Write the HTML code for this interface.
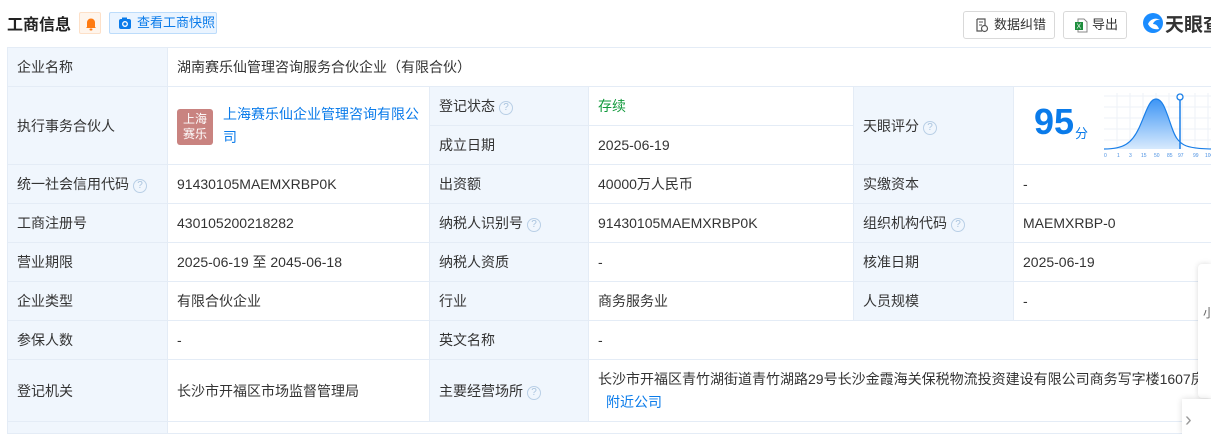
<!DOCTYPE html>
<html><head><meta charset="utf-8"><style>
*{margin:0;padding:0;box-sizing:border-box}
html,body{width:1211px;height:434px;overflow:hidden}
body{background:#fff;font-family:"Liberation Sans","Noto Sans CJK SC",sans-serif;color:#333;font-size:14px;position:relative}
.title{position:absolute;left:7px;top:11px;font-size:16px;font-weight:bold;color:#222}
.bell{position:absolute;left:79px;top:12px;width:22px;height:22px;border:1px solid #fde0c8;background:#fff5ec;border-radius:2px}
.snap{position:absolute;left:109px;top:12px;width:108px;height:22px;border:1px solid #bcdcfb;background:#eaf4ff;border-radius:2px;color:#0a7bea;font-size:13px;line-height:20px;padding-left:27px}
.btn{position:absolute;top:11px;height:28px;border:1px solid #d9d9d9;border-radius:3px;font-size:13px;line-height:26px;color:#333}
table{position:absolute;left:7px;top:47px;border-collapse:collapse;table-layout:fixed;width:1270px}
td{border:1px solid #e4ecf6;padding:0 9px;height:39px;vertical-align:middle}
td.l{background:#f0f6fd}
.q{display:inline-block;width:14px;height:14px;border:1px solid #b9cfe6;border-radius:50%;color:#a9c3de;font-size:10px;line-height:12px;text-align:center;vertical-align:1px;margin-left:4px}
a{color:#0a7bea;text-decoration:none}
</style></head><body>
<div class="title">工商信息</div>
<div class="bell"><svg width="22" height="22" viewBox="0 0 22 22"><path d="M7 14V9.5a4 4 0 0 1 8 0V14l1 1H6z" fill="#ff7b12"/><rect x="9.5" y="15.5" width="3" height="2" rx="1" fill="#ff7b12"/></svg></div>
<div class="snap"><svg style="position:absolute;left:8px;top:3px" width="14" height="14" viewBox="0 0 14 14"><rect x="1" y="3" width="12" height="10" rx="2" fill="#0a7bea"/><rect x="4" y="1.5" width="5" height="3" fill="#0a7bea"/><circle cx="7" cy="8" r="2.3" fill="none" stroke="#fff" stroke-width="1.3"/></svg>查看工商快照</div>
<div class="btn" style="left:963px;width:92px;padding-left:30px"><svg style="position:absolute;left:11px;top:6px" width="14" height="15" viewBox="0 0 14 15"><path d="M2 1h8v6M2 1v12h5" fill="none" stroke="#555" stroke-width="1.2"/><circle cx="9.5" cy="10.5" r="3" fill="none" stroke="#555" stroke-width="1.2"/><path d="M4 4h4M4 7h3" stroke="#555"/></svg>数据纠错</div>
<div class="btn" style="left:1063px;width:64px;padding-left:28px"><svg style="position:absolute;left:10px;top:6px" width="14" height="15" viewBox="0 0 14 15"><path d="M4 1h6l3 3v10H4z" fill="none" stroke="#888"/><rect x="1" y="4" width="8" height="8" fill="#1e8e3e"/><text x="2.5" y="10.5" font-size="7" fill="#fff" font-family="Liberation Sans">X</text></svg>导出</div>
<svg style="position:absolute;left:1142px;top:12px" width="22" height="22" viewBox="0 0 22 22"><circle cx="11" cy="11" r="10" fill="#1a8cff"/><path d="M6 12c2-5 8-7 12-4-3-1-6 1-7 4 3 0 5 2 6 5-5 1-9-1-11-5z" fill="#fff"/></svg>
<div style="position:absolute;left:1165px;top:10px;font-size:19px;font-weight:bold;color:#333;white-space:nowrap">天眼查</div>
<table>
<colgroup><col style="width:160px"><col style="width:262px"><col style="width:159px"><col style="width:265px"><col style="width:160px"><col style="width:264px"></colgroup>
<tr><td class="l">企业名称</td><td colspan="5">湖南赛乐仙管理咨询服务合伙企业（有限合伙）</td></tr>
<tr><td class="l" rowspan="2">执行事务合伙人</td><td rowspan="2" style="position:relative;padding-left:55px;line-height:23px"><div style="position:absolute;left:9px;top:22px;width:36px;height:36px;background:#c98380;border-radius:3px;color:#fff;font-size:12px;line-height:15px;text-align:center;padding-top:3px">上海<br>赛乐</div><a>上海赛乐仙企业管理咨询有限公司</a></td><td class="l">登记状态<span class="q">?</span></td><td style="color:#139a3d">存续</td><td class="l" rowspan="2">天眼评分<span class="q">?</span></td><td rowspan="2" style="position:relative"><span style="position:absolute;left:20px;top:14px;font-size:36px;font-weight:bold;color:#0a7bea">95</span><span style="position:absolute;left:61px;top:36px;font-size:13px;color:#0a7bea">分</span>
<svg style="position:absolute;left:90px;top:6px" width="110" height="66" viewBox="0 0 110 66"><defs><linearGradient id="g" x1="0" y1="0" x2="0" y2="1"><stop offset="0" stop-color="#3d95f5"/><stop offset="1" stop-color="#d8eafd"/></linearGradient></defs><g stroke="#eef2f7" stroke-width="1"><path d="M0 3H110M0 14H110M0 25H110M0 36H110M0 47H110M13 0V56M26 0V56M39 0V56M52 0V56M65 0V56M78 0V56M91 0V56M104 0V56"/></g><path d="M0 56C20 56 28 50 35 35S45 6 52 6 62 18 68 35 78 52 76 52L76 56z" fill="url(#g)"/><path d="M0 56C20 56 28 50 35 35S45 6 52 6 62 18 68 35 80 56 110 56" fill="none" stroke="#1a7fe8" stroke-width="1.2"/><path d="M76 4V56" stroke="#1a7fe8" stroke-width="1.5"/><circle cx="76" cy="4" r="3" fill="#fff" stroke="#1a7fe8" stroke-width="1.3"/><g font-size="5" fill="#4a90e2" font-family="Liberation Sans"><text x="0" y="64">0</text><text x="13" y="64">1</text><text x="25" y="64">3</text><text x="37" y="64">15</text><text x="50" y="64">50</text><text x="63" y="64">85</text><text x="74" y="64">97</text><text x="89" y="64">99</text><text x="101" y="64">100</text></g></svg></td></tr>
<tr><td class="l">成立日期</td><td>2025-06-19</td></tr>
<tr><td class="l">统一社会信用代码<span class="q">?</span></td><td>91430105MAEMXRBP0K</td><td class="l">出资额</td><td>40000万人民币</td><td class="l">实缴资本</td><td>-</td></tr>
<tr><td class="l">工商注册号</td><td>430105200218282</td><td class="l">纳税人识别号<span class="q">?</span></td><td>91430105MAEMXRBP0K</td><td class="l">组织机构代码<span class="q">?</span></td><td>MAEMXRBP-0</td></tr>
<tr><td class="l">营业期限</td><td>2025-06-19 至 2045-06-18</td><td class="l">纳税人资质</td><td>-</td><td class="l">核准日期</td><td>2025-06-19</td></tr>
<tr><td class="l">企业类型</td><td>有限合伙企业</td><td class="l">行业</td><td>商务服务业</td><td class="l">人员规模</td><td>-</td></tr>
<tr><td class="l">参保人数</td><td>-</td><td class="l">英文名称</td><td colspan="3">-</td></tr>
<tr><td class="l" style="height:62px">登记机关</td><td>长沙市开福区市场监督管理局</td><td class="l">主要经营场所<span class="q">?</span></td><td colspan="3" style="line-height:23px;white-space:nowrap;overflow:hidden">长沙市开福区青竹湖街道青竹湖路29号长沙金霞海关保税物流投资建设有限公司商务写字楼1607房<br><a style="margin-left:8px">附近公司</a></td></tr>
<tr><td class="l" style="height:12px"></td><td colspan="5" style="height:12px"></td></tr>
</table>
<div style="position:absolute;left:1198px;top:264px;width:13px;height:134px;background:#fff;box-shadow:0 0 6px rgba(0,0,0,.15);border-radius:4px 0 0 4px;font-size:12px;padding:40px 0 0 5px;color:#666;overflow:hidden">小</div>
<div style="position:absolute;left:1182px;top:399px;width:29px;height:35px;background:#fff;box-shadow:0 0 6px rgba(0,0,0,.15);color:#999;font-size:20px;padding:10px 0 0 3px;overflow:hidden">&#x203A;</div>
</body></html>
